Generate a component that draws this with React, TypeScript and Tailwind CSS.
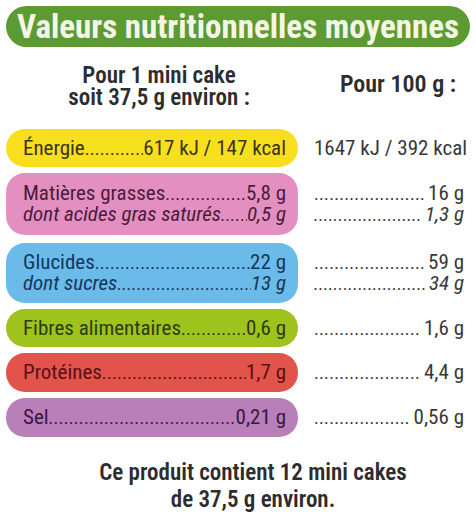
const DOTS = ".".repeat(120);

type Line = { label: string; value: string; right: string; italic?: boolean };

function PillLine({ line, text }: { line: Line; text: string }) {
  return (
    <div className={`flex items-baseline whitespace-nowrap ${line.italic ? "italic" : ""} ${text}`}>
      <span>{line.label}</span>
      <span className="flex-1 min-w-0 overflow-hidden tracking-[0.3px] text-[18px]">{DOTS}</span>
      <span>{line.value}</span>
    </div>
  );
}

function RightLine({ line, dots = true }: { line: Line; dots?: boolean }) {
  return (
    <div className={`flex items-baseline whitespace-nowrap ${line.italic ? "italic" : ""}`}>
      {dots ? (
        <span className="flex-1 min-w-0 overflow-hidden tracking-[0.3px] text-[18px] mr-[3px]">{DOTS}</span>
      ) : (
        <span className="flex-1 min-w-0" />
      )}
      <span>{line.right}</span>
    </div>
  );
}

function Row({
  lines,
  bg,
  text,
  h,
  rightDots = true,
}: {
  lines: Line[];
  bg: string;
  text: string;
  h: string;
  rightDots?: boolean;
}) {
  return (
    <div className={`flex ${h}`}>
      <div className={`w-[292px] ${bg} rounded-[19px] flex flex-col justify-center pl-[17px] pr-[12px]`}>
        {lines.map((l) => (
          <PillLine key={l.label} line={l} text={text} />
        ))}
      </div>
      <div className="flex-1 min-w-0 flex flex-col justify-center pl-[16px] pr-[6px] text-[#383838]">
        {lines.map((l) => (
          <RightLine key={l.label} line={l} dots={rightDots} />
        ))}
      </div>
    </div>
  );
}

export default function App() {
  return (
    <div className="w-[476px] h-[512px] bg-white px-[6px] pt-[6px] font-['Roboto_Condensed',sans-serif] text-[21px] leading-[21px] overflow-hidden">
      <div className="h-[41px] rounded-[21px] bg-[#5c9b32] flex items-center justify-center">
        <span className="text-[#f3f6e6] font-bold text-[33px] leading-none">Valeurs nutritionnelles moyennes</span>
      </div>
      <div className="flex h-[82px] text-[#2d2d2d] font-semibold text-[23px] leading-[22px]">
        <div className="w-[306px] flex flex-col items-center justify-center pb-[2px]">
          <div>Pour 1 mini cake</div>
          <div>soit 37,5 g environ :</div>
        </div>
        <div className="flex-1 flex items-center justify-center pb-[8px] pl-[14px] text-[24px]">Pour 100 g :</div>
      </div>
      <div className="flex flex-col gap-[6px]">
        <Row
          h="h-[38px]"
          bg="bg-[#f7df1e]"
          text="text-[#3a3320]"
          rightDots={false}
          lines={[{ label: "Énergie", value: "617 kJ / 147 kcal", right: "1647 kJ / 392 kcal" }]}
        />
        <Row
          h="h-[62px]"
          bg="bg-[#e48fc1]"
          text="text-[#4a1c3b]"
          lines={[
            { label: "Matières grasses ", value: "5,8 g", right: "16 g" },
            { label: "dont acides gras saturés", value: "0,5 g", right: "1,3 g", italic: true },
          ]}
        />
        <div className="h-[2px] -mt-[6px]" />
        <Row
          h="h-[60px]"
          bg="bg-[#6bbbea]"
          text="text-[#16365a]"
          lines={[
            { label: "Glucides ", value: "22 g", right: "59 g" },
            { label: "dont sucres", value: "13 g", right: "34 g", italic: true },
          ]}
        />
        <Row
          h="h-[38px]"
          bg="bg-[#9fc31d]"
          text="text-[#2c3a12]"
          lines={[{ label: "Fibres alimentaires", value: "0,6 g", right: "1,6 g" }]}
        />
        <Row
          h="h-[39px]"
          bg="bg-[#e1534b]"
          text="text-[#5a1013]"
          lines={[{ label: "Protéines ", value: "1,7 g", right: "4,4 g" }]}
        />
        <Row
          h="h-[39px]"
          bg="bg-[#b97fb9]"
          text="text-[#3d1542]"
          lines={[{ label: "Sel", value: "0,21 g", right: "0,56 g" }]}
        />
      </div>
      <div className="mt-[22px] pl-[30px] flex flex-col items-center text-[#2d2d2d] font-semibold text-[23px] leading-[27px]">
        <div>Ce produit contient 12 mini cakes</div>
        <div>de 37,5 g environ.</div>
      </div>
    </div>
  );
}
